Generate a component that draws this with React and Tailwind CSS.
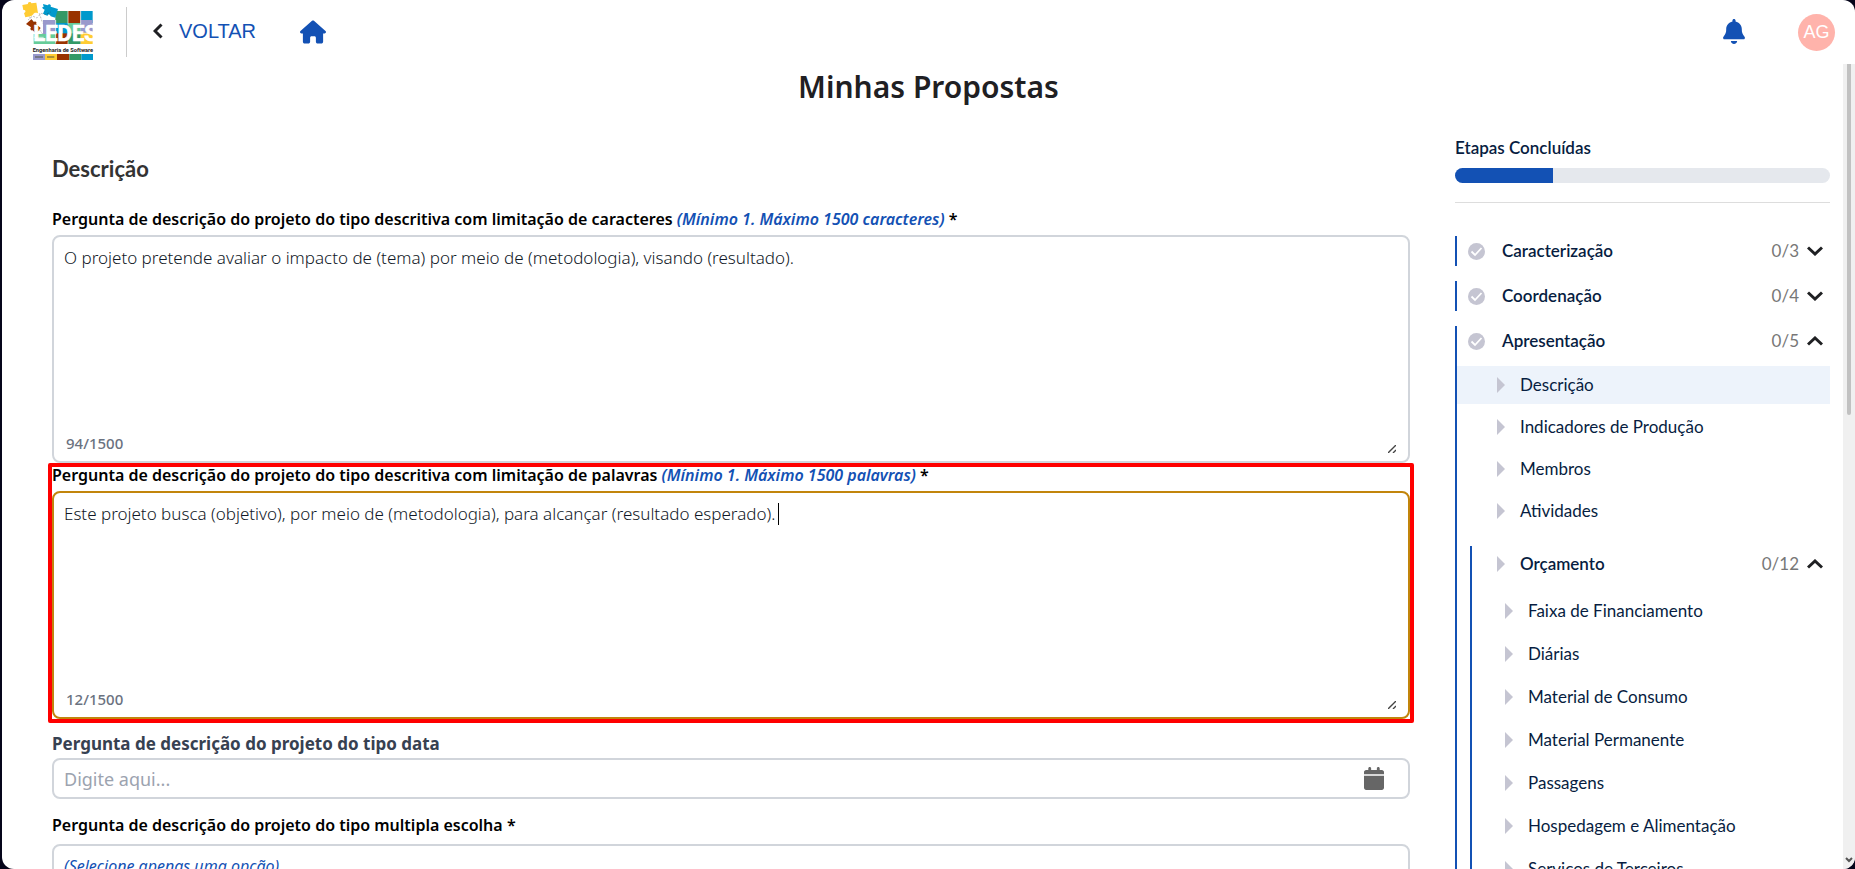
import { useState } from "react";
import { FaHouse, FaBell, FaCalendar } from "react-icons/fa6";

const presentationItems = [
  "Descrição",
  "Indicadores de Produção",
  "Membros",
  "Atividades",
];

const budgetItems = [
  "Faixa de Financiamento",
  "Diárias",
  "Material de Consumo",
  "Material Permanente",
  "Passagens",
  "Hospedagem e Alimentação",
  "Serviços de Terceiros",
];

function Logo() {
  return (
    <svg
      viewBox="0 0 240 192"
      className="w-20 h-16 shrink-0"
      role="img"
      aria-label="LEDES Engenharia de Software"
    >
      <path fill="#339966" d="M112 33h38v36h-38z" />
      <path fill="#993300" d="M150 33h38v36h-38z" />
      <path fill="#0099cc" d="M188 33h36v36h-36z" />
      <path fill="#66cc99" d="M47 102h66v30H47z" />
      <path fill="#9999cc" d="M75 60h38v42H75z" />
      <path fill="#0099cc" d="M113 69h37v34h-37z" />
      <path fill="#66cc99" d="M150 69h38v40h-38z" />
      <path fill="#9999cc" d="M188 60h36v40h-36z" />
      <path fill="#993300" d="M113 100h37v32h-37z" />
      <path fill="#339966" d="M150 100h38v32h-38z" />
      <path fill="#ffcc33" d="M188 98h36v34h-36z" />
      <path
        fill="#ffcc33"
        d="M13 15l17-3c-2-7 9-9 10-2l15-2 5 32c-8-3-12-1-14 3l-6 5-18 4-4-13c7-2 5-11-2-9z"
      />
      <path
        fill="#0099cc"
        d="M75 12l14 4c3-6 12-3 9 4l22 7-8 26-14-4c-3-8-10-6-9-1l-14-7 5-12c-7-3-10-9-3-8z"
      />
      <path
        fill="#993300"
        d="M24 72l16-14 8 8c5-4 10 2 6 6l14 12-14 17-10-10c-6 2-9-4-5-9z"
      />
      <path
        fill="none"
        stroke="#333"
        strokeWidth="1"
        strokeDasharray="6 4"
        d="M30 60l14-12 12 6 14-14 12 4 16-8M34 50l40 52M64 40l10 30"
      />
      <text
        x="46"
        y="124"
        fill="#fff"
        stroke="#fff"
        strokeWidth="2"
        fontFamily="Liberation Sans Narrow, Roboto, sans-serif"
        fontWeight="700"
        fontSize="66"
      >
        LEDES
      </text>
      <path
        fill="none"
        stroke="#fff"
        strokeWidth="2"
        d="M150 33v40M188 33v40M47 112h30M113 60v70M188 100h36M150 124v8"
      />
      <path fill="#fff" d="M40 133h190v28H40z" />
      <text
        x="44"
        y="156"
        fill="#222"
        fontFamily="Roboto, sans-serif"
        fontWeight="700"
        fontSize="17"
      >
        Engenharia de Software
      </text>
      <path fill="#9999cc" d="M45 162h36v18H45z" />
      <path fill="#ffcc33" d="M81 162h36v18H81z" />
      <path fill="#993300" d="M117 162h37v18h-37z" />
      <path fill="#339966" d="M154 162h36v18h-36z" />
      <path fill="#0099cc" d="M190 162h35v18h-35z" />
      <path stroke="#554" strokeWidth="3" d="M51 171h24M87 171h22" />
    </svg>
  );
}

function Chevron({ direction }) {
  return (
    <svg
      viewBox="0 0 16 10"
      className="w-4 h-2.5 text-[#1f2023]"
      fill="none"
      stroke="currentColor"
      strokeWidth="3"
      aria-hidden="true"
    >
      <path d={direction === "up" ? "M1 8.5l7-6.5 7 6.5" : "M1 1.500l7 6.500 7-6.500"} />
    </svg>
  );
}

function Arrow() {
  return (
    <svg viewBox="0 0 8 16" className="w-2 h-4 shrink-0" aria-hidden="true">
      <path fill="#c5c5d2" d="M0 0l8 8-8 8z" />
    </svg>
  );
}

function CheckCircle() {
  return (
    <svg
      viewBox="0 0 17 17"
      className="w-[17px] h-[17px] shrink-0"
      aria-hidden="true"
    >
      <circle cx="8.500" cy="8.500" r="8.500" fill="#c5c5d2" />
      <path
        d="M3.500 8.500L7 12l6.500-7"
        fill="none"
        stroke="#fff"
        strokeWidth="1.800"
      />
    </svg>
  );
}

function Section({ title, count, open, children }) {
  return (
    <div className="border-l-2 border-[#1351b4]">
      <button
        type="button"
        aria-expanded={!!open}
        className="flex items-center w-full h-[30px] pl-[11px] pr-[7px] text-[17px] font-semibold"
      >
        <CheckCircle />
        <span className="ml-[17px]">{title}</span>
        <span className="ml-auto mr-2 font-normal text-[#777]">{count}</span>
        <Chevron direction={open ? "up" : "down"} />
      </button>
      {children}
    </div>
  );
}

function StepLink({ label, active, nested }) {
  return (
    <a
      href="#"
      className={`flex items-center gap-[15px] h-[38px] text-[17px] ${
        nested ? "pl-[33px]" : "pl-10"
      } ${active ? "bg-[#edf3fb]" : ""}`}
    >
      <Arrow />
      {label}
    </a>
  );
}

function Question({ id, label, hint, required }) {
  return (
    <label
      htmlFor={id}
      className="block h-7 leading-6 text-base font-semibold text-black"
    >
      {label}{" "}
      {hint && <em className="text-[#1351b4]">{hint}</em>} {required && "*"}
    </label>
  );
}

function LongAnswer({ id, value, onChange, count, focused }) {
  return (
    <div className="relative">
      <textarea
        id={id}
        value={value}
        onChange={onChange}
        className={`block w-full h-[228px] resize-none rounded-lg border-2 px-2.5 py-[7px] text-[17px] leading-7 font-light text-[#111827] outline-none ${
          focused ? "border-[#c2850c]" : "border-[#d1d5db]"
        }`}
      />
      {focused && (
        <span className="absolute left-[726px] top-3 h-[22px] w-px bg-black" />
      )}
      <span className="absolute left-3.5 bottom-2.5 text-[15px] font-medium leading-5 text-[#6b7280]">
        {count}/1500
      </span>
      <svg
        viewBox="0 0 8 8"
        className="absolute right-3.5 bottom-2.5 w-2 h-2"
        stroke="#444"
        strokeWidth="1.4"
        aria-hidden="true"
      >
        <path d="M0 8l8-8M5 8l3-3" />
      </svg>
    </div>
  );
}

export default function App() {
  const [project, setProject] = useState(
    "O projeto pretende avaliar o impacto de (tema) por meio de (metodologia), visando (resultado)."
  );
  const [summary, setSummary] = useState(
    "Este projeto busca (objetivo), por meio de (metodologia), para alcançar (resultado esperado)."
  );

  return (
    <div className="h-screen bg-[#05051a] pl-0.5 font-['Noto_Sans',sans-serif]">
      <div className="flex flex-col h-full overflow-hidden rounded-xl bg-white">
        <header className="flex items-center h-16 shrink-0 pl-4 pr-5">
          <Logo />
          <div className="ml-7 h-[50px] w-px bg-[#ccc]" />
          <button
            type="button"
            className="ml-[26px] pb-0.5 flex items-center gap-4 font-['Liberation_Sans',sans-serif] text-xl text-[#1351b4]"
          >
            <svg
              viewBox="0 0 10 16"
              className="w-2.5 h-4 text-[#1f2023]"
              fill="none"
              stroke="currentColor"
              strokeWidth="3"
              aria-hidden="true"
            >
              <path d="M8.500 1.500L2 8l6.500 6.500" />
            </svg>
            VOLTAR
          </button>
          <a href="#" aria-label="Início" className="ml-11 text-[#1351b4]">
            <FaHouse className="w-[26px] h-6" />
          </a>
          <button
            type="button"
            aria-label="Notificações"
            className="ml-auto mr-[52px] pb-0.5 text-[#1351b4]"
          >
            <FaBell className="w-6 h-[25px]" />
          </button>
          <button
            type="button"
            className="size-[37px] rounded-full bg-[#ffb3ab] font-['Liberation_Sans',sans-serif] text-lg text-white"
          >
            AG
          </button>
        </header>

        <div className="flex flex-1 min-h-0">
          <main className="flex-1 min-w-0 overflow-hidden">
            <h1 className="pl-3 pt-[3px] text-center text-3xl leading-10 font-semibold text-[#1f2023]">
              Minhas Propostas
            </h1>

            <div className="flex gap-[45px] pl-[50px] pr-[13px] pt-7">
              <form className="flex-1 min-w-0 pt-5">
                <h2 className="h-[52px] font-['Lato',sans-serif] text-[22px] leading-7 font-bold text-[#333]">
                  Descrição
                </h2>

                <Question
                  id="project"
                  label="Pergunta de descrição do projeto do tipo descritiva com limitação de caracteres"
                  hint="(Mínimo 1. Máximo 1500 caracteres)"
                  required
                />
                <LongAnswer
                  id="project"
                  value={project}
                  onChange={(e) => setProject(e.target.value)}
                  count={94}
                />

                <div className="relative">
                  <Question
                    id="summary"
                    label="Pergunta de descrição do projeto do tipo descritiva com limitação de palavras"
                    hint="(Mínimo 1. Máximo 1500 palavras)"
                    required
                  />
                  <LongAnswer
                    id="summary"
                    value={summary}
                    onChange={(e) => setSummary(e.target.value)}
                    count={12}
                    focused
                  />
                  <div className="absolute -left-1 -right-1 top-0 -bottom-1 rounded-xs border-4 border-[#f00] pointer-events-none" />
                </div>

                <label
                  htmlFor="date"
                  className="block pt-[13px] h-[39px] text-[17px] leading-6 font-bold text-[#374151]"
                >
                  Pergunta de descrição do projeto do tipo data
                </label>
                <div className="flex items-center h-[41px] rounded-lg border-2 border-[#d1d5db] pl-2.5 pr-6">
                  <input
                    id="date"
                    type="text"
                    placeholder="Digite aqui..."
                    className="flex-1 min-w-0 text-lg leading-7 outline-none placeholder:text-[#9ca3af]"
                  />
                  <FaCalendar className="w-5 h-[23px] text-[#666]" />
                </div>

                <div className="pt-3.5">
                  <Question
                    id="choice"
                    label="Pergunta de descrição do projeto do tipo multipla escolha"
                    required
                  />
                </div>
                <div
                  id="choice"
                  className="mt-[3px] h-40 rounded-lg border-2 border-[#d1d5db] px-2.5 py-2 text-base leading-6 italic text-[#1351b4]"
                >
                  (Selecione apenas uma opção)
                </div>
              </form>

              <aside className="w-[375px] shrink-0 font-['Lato',sans-serif] text-base text-[#071d41]">
                <h2 className="h-[33px] pt-px leading-6 text-[17px] font-semibold">
                  Etapas Concluídas
                </h2>
                <div className="h-[15px] overflow-hidden rounded-full bg-[#e5e8ed]">
                  <div className="h-full w-[26%] bg-[#1351b4]" />
                </div>
                <hr className="mt-[19px] mb-[33px] border-[#ddd]" />

                <nav className="flex flex-col gap-[15px]">
                  <Section title="Caracterização" count="0/3" />
                  <Section title="Coordenação" count="0/4" />
                  <Section title="Apresentação" count="0/5" open>
                    <div className="flex flex-col gap-1 pt-2.5">
                      {presentationItems.map((item) => (
                        <StepLink
                          key={item}
                          label={item}
                          active={item === "Descrição"}
                        />
                      ))}
                    </div>
                    <div className="mt-4 ml-[13px] border-l-2 border-[#1351b4]">
                      <button
                        type="button"
                        aria-expanded="true"
                        className="flex items-center w-full h-9 pl-[25px] pr-[7px] text-[17px] font-semibold"
                      >
                        <Arrow />
                        <span className="ml-[15px]">Orçamento</span>
                        <span className="ml-auto mr-2 font-normal text-[#777]">
                          0/12
                        </span>
                        <Chevron direction="up" />
                      </button>
                      <div className="flex flex-col gap-[5px] pt-2.5">
                        {budgetItems.map((item) => (
                          <StepLink key={item} label={item} nested />
                        ))}
                      </div>
                    </div>
                  </Section>
                </nav>
              </aside>
            </div>
          </main>

          <div className="flex flex-col items-center justify-between w-3 bg-[#f0f0f0] pb-1.5">
            <div className="w-1 h-[351px] rounded-b-full bg-[#c1c1c1]" />
            <svg
              viewBox="0 0 8 6"
              className="w-2 h-1.5"
              fill="none"
              stroke="#555"
              strokeWidth="2"
              aria-hidden="true"
            >
              <path d="M1 1l3 3 3-3" />
            </svg>
          </div>
        </div>
      </div>
    </div>
  );
}
